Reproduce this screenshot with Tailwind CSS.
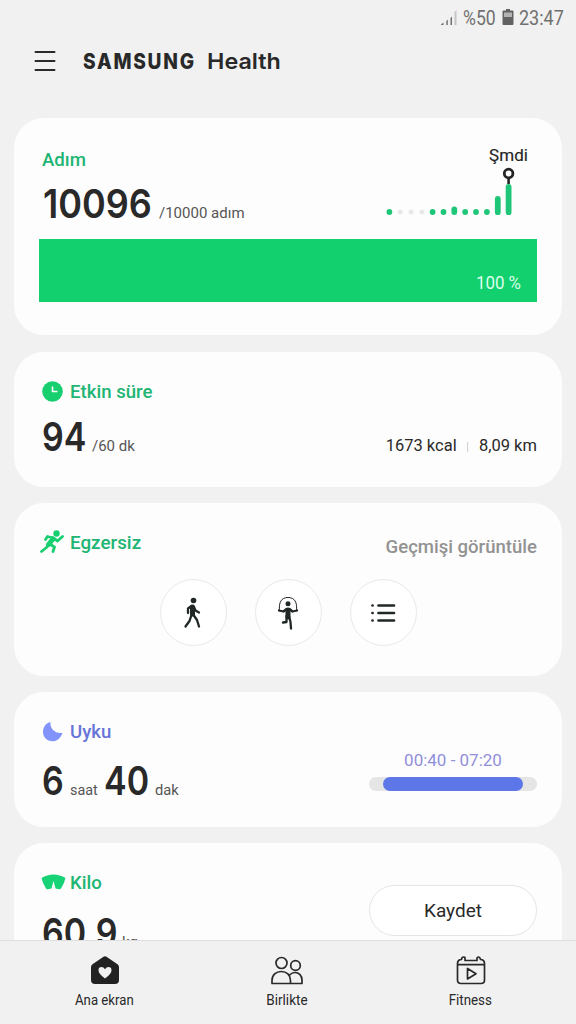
<!DOCTYPE html>
<html lang="tr">
<head>
<meta charset="utf-8">
<meta name="viewport" content="width=device-width, initial-scale=1">
<title>Samsung Health</title>
<script src="https://cdn.jsdelivr.net/npm/@tailwindcss/browser@4"></script>
</head>
<body class="bg-[#f1f1f1] font-['Roboto',sans-serif] text-[#292929]">
<div class="flex h-[1024px] w-[576px] flex-col overflow-hidden">
  <header class="h-[118px] shrink-0">
    <div class="flex h-9 items-center justify-end pr-[12px] text-[20px] leading-9 text-[#707070]">
      <svg class="mr-[5px] h-[18px] w-[18px]" viewBox="0 0 18 18" fill="#707070"><path d="M1 15.500 3.500 13.500v2.500H1zM6.300 12l1.500-1.500v5.500H6.300zM10.500 9l1.500-1.500v8.500h-1.500z"/><path fill="#c5c5c5" d="M14.500 3 16.500 1v15h-2z"/></svg>
      <span class="w-[34px]"><span class="inline-block origin-left scale-x-[0.88]">%50</span></span>
      <svg class="mr-[5px] mb-[2px] ml-[5px] h-[18px] w-[12px]" viewBox="0 0 12 18"><path fill="#626262" d="M4 1h4v1.500h2.500q1 0 1 1V16q0 1-1 1h-9q-1 0-1-1V3.500q0-1 1-1H4z"/><path fill="#b3b3b3" d="M2 4.500h8v4.500H2z"/></svg>
      <span class="w-[45px]"><span class="inline-block origin-left scale-x-[0.9]">23:47</span></span>
    </div>
    <div class="mt-[7px] flex h-9 items-center pl-[34px]">
      <svg class="h-[22px] w-[22px]" viewBox="0 0 22 22" stroke="#292929" stroke-width="2" stroke-linecap="round"><path d="M1.500 2h19M1.500 11h19M1.500 20h19"/></svg>
      <h1 class="ml-[27px] flex font-['Inter',sans-serif] text-[22px] leading-9">
        <span class="w-[124px]"><span class="inline-block origin-left scale-x-[0.87] font-extrabold tracking-[2px]">S<span class="relative after:absolute after:top-[17px] after:left-[4px] after:h-[6px] after:w-[8px] after:bg-[#f1f1f1] after:[clip-path:polygon(42%_0,58%_0,90%_100%,10%_100%)]">A</span>MSUNG</span></span>
        <span class="inline-block origin-left scale-x-[1.06] font-semibold">Health</span>
      </h1>
    </div>
  </header>

  <main class="flex min-h-0 flex-1 flex-col gap-4 overflow-hidden px-[14px]">
    <section class="mb-px h-[217px] shrink-0 rounded-[30px] bg-[#fdfdfd] px-[25px] pt-7">
      <div class="flex h-[93px] justify-between">
        <div class="pl-[3px]">
          <h2 class="h-[26px] pt-px text-[19px] leading-[26px] font-medium text-[#20b573]"><span class="inline-block origin-left scale-x-[0.98]">Adım</span></h2>
          <div class="flex h-[52px] items-baseline pt-[6px] leading-[52px]">
            <span class="w-[117px] pl-px font-['Inter',sans-serif] text-[40px] font-semibold"><span class="inline-block origin-left scale-x-[0.9]">10096</span></span>
            <span class="text-[15px] text-[#555]">/10000 adım</span>
          </div>
        </div>
        <svg class="h-[74px] w-[152px] font-['Roboto',sans-serif]" viewBox="385 146 152 74">
          <text x="489" y="160.500" font-size="17" fill="#252525" stroke="#252525" stroke-width=".15" textLength="39">Şmdi</text>
          <g stroke="#20c677" stroke-width="5.800" stroke-linecap="round"><path d="M389.400 212v.010M432.600 212v.010M443.500 212v.010M454.300 209.500v2.500M465.200 212v.010M476 212v.010M486.900 212v.010M497.800 199v13.200M508.600 187v25.200"/><path stroke="#e8e8e8" stroke-width="5" d="M400.300 212v.010M411.100 212v.010M422 212v.010"/></g>
          <path d="M508.600 178v6" stroke="#252525" stroke-width="2.600"/><circle cx="508.600" cy="173.500" r="4.300" fill="#fdfdfd" stroke="#252525" stroke-width="2.800"/>
        </svg>
      </div>
      <div class="flex h-[63px] justify-end bg-[#12d06e] pt-[32px] pr-[16px] text-[18px] leading-6 text-[#dcffeb]"><span class="inline-block origin-right scale-x-[0.94]">100 %</span></div>
    </section>

    <section class="flex h-[135px] shrink-0 justify-between rounded-[30px] bg-[#fdfdfd] px-[25px] pt-[27px]">
      <div class="pl-[3px]">
        <h2 class="flex h-[26px] items-center text-[19px] leading-[26px] font-medium text-[#20b573]">
          <svg class="mr-[7px] mb-[2px] h-[21px] w-[21px]" viewBox="0 0 21 21"><circle cx="10.500" cy="10.500" r="10.300" fill="#18cf70"/><path d="M10.500 5.500v5h5" fill="none" stroke="#fff" stroke-width="1.600"/></svg>
          <span class="inline-block origin-left scale-x-[0.98]">Etkin süre</span>
        </h2>
        <div class="flex h-[52px] items-baseline pt-[6px] leading-[52px]">
          <span class="w-[50px] font-['Inter',sans-serif] text-[40px] font-semibold"><span class="inline-block origin-left scale-x-[0.85]">94</span></span>
          <span class="text-[15px] text-[#555]">/60 dk</span>
        </div>
      </div>
      <div class="mt-[54px] flex h-6 origin-right scale-x-[0.97] items-center text-[17px] leading-6"><span>1673 kcal</span><i class="mt-[3px] mr-[11px] ml-[11px] h-[10px] w-px bg-[#ccc]"></i><span>8,09 km</span></div>
    </section>

    <section class="h-[173px] shrink-0 rounded-[30px] bg-[#fdfdfd] px-[25px] pt-[27px]">
      <div class="flex h-[49px] justify-between">
        <h2 class="flex h-[26px] items-center text-[19px] leading-[26px] font-medium text-[#20b573]">
          <svg class="mr-[6px] mb-[2px] h-6 w-[25px]" viewBox="0 0 25 24" fill="none" stroke="#18cf70" stroke-linecap="round" stroke-linejoin="round"><circle cx="17.500" cy="3.500" r="3.200" fill="#18cf70" stroke="none"/><path stroke-width="5" d="m14 9-4.500 5.500"/><path stroke-width="2.800" d="M14.500 8 8.500 6.500l-2 3M15 8.500l3.500 2.500 5-4.500M10.500 14l5 3-1.500 4.500M10 14l-2.500 3.500L2.500 21.500"/></svg>
          <span class="inline-block origin-left scale-x-[0.99]">Egzersiz</span>
        </h2>
        <a class="mt-[5px] origin-right scale-x-[1.03] text-[18px] leading-6 font-medium text-[#929292]">Geçmişi görüntüle</a>
      </div>
      <div class="flex justify-center gap-[28px]">
        <button class="flex size-[67px] items-center justify-center rounded-full border border-[#e9e9e9] bg-white">
          <svg class="h-[32px] w-[20px]" viewBox="0 0 20 32" fill="none" stroke="#202825" stroke-linecap="round" stroke-linejoin="round"><circle cx="10.500" cy="3.500" r="2.800" fill="#202825" stroke="none"/><path stroke-width="5" d="M9.500 10v7"/><path stroke-width="2.300" d="M8.500 9 5 11.500V16M11 10l1.500 3.500 3.500 2M8.500 18l-2 6L2.500 29.500M10.500 18l3.500 5 2 6.500"/></svg>
        </button>
        <button class="flex size-[67px] items-center justify-center rounded-full border border-[#e9e9e9] bg-white">
          <svg class="h-[34px] w-[22px]" viewBox="0 0 22 34" fill="none" stroke="#202825" stroke-linecap="round" stroke-linejoin="round"><path stroke-width="1" d="M2.500 15C1.500 6 4.500 1.500 11 1.500S20.500 6 19.500 15"/><circle cx="11" cy="7.700" r="2.500" fill="#202825" stroke="none"/><path stroke-width="5" d="M11 14v7"/><path stroke-width="2.300" d="M2 14.500 6.500 15.500 9.500 13M20 14.500l-4.500 1L12.500 13M9.500 20v6l-3.500.500M12 20l1.500 6 .500 6.500"/></svg>
        </button>
        <button class="flex size-[67px] items-center justify-center rounded-full border border-[#e9e9e9] bg-white">
          <svg class="h-[20px] w-[26px]" viewBox="0 0 26 20" stroke="#202825" stroke-width="2.700" stroke-linecap="round"><path d="M8.500 2.500h15.500M8.500 10h15.500M8.500 17.500h15.500M2.500 2.500h.100M2.500 10h.100M2.500 17.500h.100"/></svg>
        </button>
      </div>
    </section>

    <section class="flex h-[135px] shrink-0 justify-between rounded-[30px] bg-[#fdfdfd] px-[25px] pt-[27px]">
      <div class="pl-[3px]">
        <h2 class="flex h-[26px] items-center text-[19px] leading-[26px] font-medium text-[#6875d8]">
          <svg class="mr-[7px] mb-[2px] h-[21px] w-[21px]" viewBox="0 0 21 21"><path fill="#8294fb" d="M8.500 1C7.500 7 13 13 20.500 12 18.500 17.500 15 20.300 10.500 20.300 5 20.300 1 16 1 11 1 6 4 2 8.500 1z"/></svg>
          <span class="inline-block origin-left scale-x-[0.98]">Uyku</span>
        </h2>
        <div class="flex h-[60px] items-baseline pt-[6px] leading-[60px]">
          <span class="w-[28px] font-['Inter',sans-serif] text-[40px] font-semibold"><span class="inline-block origin-left scale-x-[0.85]">6</span></span>
          <span class="w-[34px] text-[15px] text-[#555]"><span class="inline-block origin-left scale-x-[0.96]">saat</span></span>
          <span class="w-[51px] font-['Inter',sans-serif] text-[40px] font-semibold"><span class="inline-block origin-left scale-x-[0.85]">40</span></span>
          <span class="text-[15px] text-[#555]"><span class="inline-block origin-left scale-x-[0.98]">dak</span></span>
        </div>
      </div>
      <div class="mt-[29px] w-[168px] text-center text-[17px] leading-6 text-[#918fda]">
        <div class="h-[29px]">00:40 - 07:20</div>
        <div class="h-[14px] rounded-full bg-[#e5e5e5] pr-[14px] pl-[14px]"><div class="h-[14px] rounded-full bg-[#5d77e8]"></div></div>
      </div>
    </section>

    <section class="flex h-[135px] shrink-0 justify-between rounded-[30px] bg-[#fdfdfd] px-[25px] pt-[27px]">
      <div class="pl-[2px]">
        <h2 class="flex h-[26px] items-center text-[19px] leading-[26px] font-medium text-[#20b573]">
          <svg class="mr-[4px] mb-[2px] h-[16px] w-[25px]" viewBox="0 0 25 16"><path fill="#18d276" d="M.500 4Q6 .500 12.500.500T24.500 4q-1 5-4.500 10.500-.700 1-1.800.800L14.500 14.500 12.500 7l-2 7.500-3.700.800q-1.100.200-1.800-.800Q1.500 9 .500 4z"/></svg>
          <span class="inline-block origin-left scale-x-[0.98]">Kilo</span>
        </h2>
        <div class="flex h-[60px] items-baseline pt-[7px] pl-px leading-[60px]">
          <span class="w-[80px] font-['Inter',sans-serif] text-[40px] font-semibold"><span class="inline-block origin-left scale-x-[0.85]">60,9</span></span>
          <span class="text-[15px] text-[#555]">kg</span>
        </div>
      </div>
      <button class="mt-[15px] h-[51px] w-[168px] rounded-full border border-[#e5e5e5] bg-white text-[19px] leading-6">Kaydet</button>
    </section>
  </main>

  <nav class="grid h-[84px] shrink-0 grid-cols-[209px_156px_211px] border-t border-[#dedede] text-[15px] leading-5">
    <a class="flex flex-col items-center pt-[15px]">
      <svg class="h-[29px] w-[30px]" viewBox="0 0 30 29"><path fill="#222" d="M13.500.800q1.500-1 3 0l11 7.500q1.500 1 1.500 3V24q0 4-4 4H5q-4 0-4-4V11.300q0-2 1.500-3z"/><path fill="#f1f1f1" d="M15 22.500Q8.500 18 8.500 14.300 8.500 11 11.500 11q2.200 0 3.500 2.200Q16.300 11 18.500 11q3 0 3 3.300 0 3.700-6.500 8.200z"/></svg>
      <span class="mt-[5px] inline-block scale-x-[0.88] whitespace-nowrap">Ana ekran</span>
    </a>
    <a class="flex flex-col items-center pt-[15px]">
      <svg class="h-[29px] w-[32px]" viewBox="0 0 32 29" fill="none" stroke="#292929" stroke-width="1.700" stroke-linejoin="round"><circle cx="10.500" cy="7" r="5.500"/><circle cx="24.500" cy="9.500" r="4.800"/><path d="M1 27.500v-3c0-5.500 4-9 9.300-9s9.200 3.500 9.200 9v3zM18.500 19c1.500-1.500 3.300-2.500 5.500-2.500 4 0 7 3 7 7.500v3.500H19.500"/></svg>
      <span class="mt-[5px] inline-block scale-x-[0.9] whitespace-nowrap">Birlikte</span>
    </a>
    <a class="flex flex-col items-center pt-[15px]">
      <svg class="h-[29px] w-[30px]" viewBox="0 0 30 29" fill="none" stroke="#292929" stroke-width="1.700" stroke-linejoin="round"><path d="M5.500 3.500C3 3.500 1.500 5 1.500 7.500V24q0 3.500 3.500 3.500h20q3.500 0 3.500-3.500V7.500c0-2.500-1.500-4-4-4L24 2q-.300-1-1.500-1T21 2v2.500H9V2Q9 1 7.500 1T6 2zM1.500 8.700h27M11.500 12.500v10.500L20 17.800z"/></svg>
      <span class="mt-[5px] inline-block scale-x-[0.89] whitespace-nowrap">Fitness</span>
    </a>
  </nav>
</div>
</body>
</html>
